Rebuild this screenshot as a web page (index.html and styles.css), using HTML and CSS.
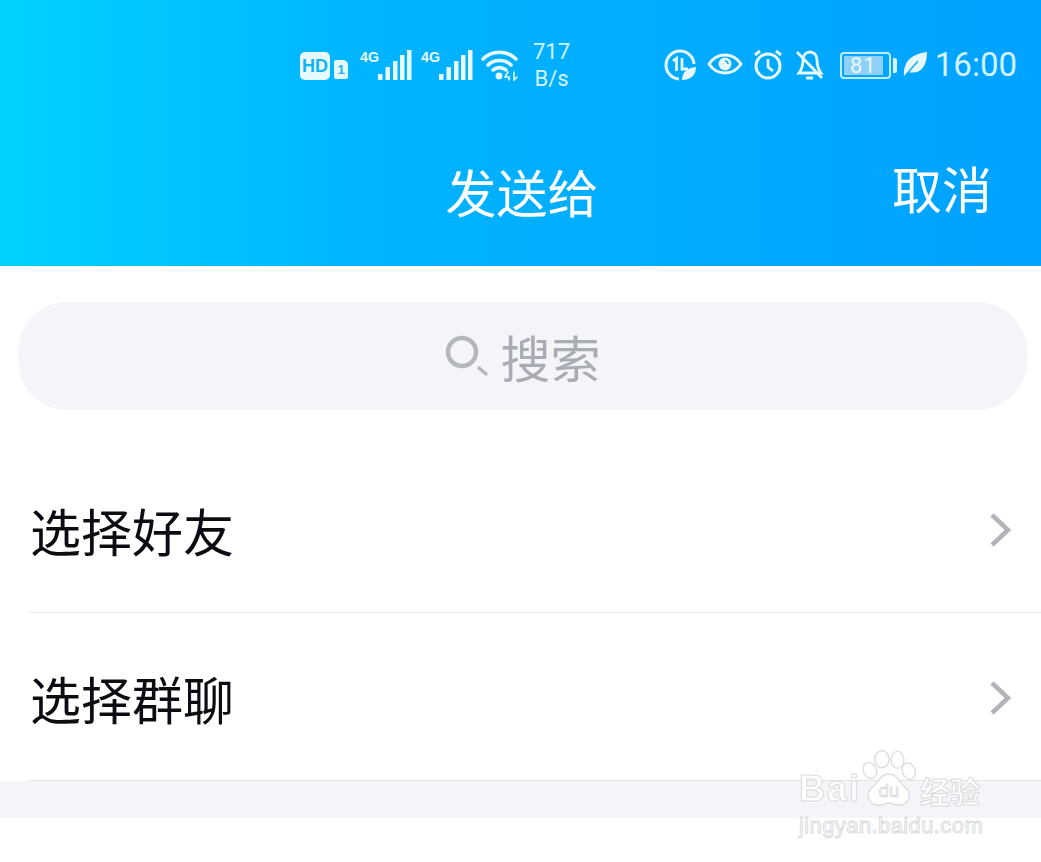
FILE: index.html
```html
<!DOCTYPE html>
<html lang="zh-CN">
<head>
    <meta charset="UTF-8">
    <title>发送给</title>
    <link rel="stylesheet" href="styles.css">
</head>
<body>

<div class="page">
    <header class="header">
        <div class="status">
            <div class="status-left">
                <span class="hd">HD</span>
                <span class="sim">1</span>
                <svg class="signal" width="52" height="34" viewBox="0 0 52 34">
                    <text x="0" y="15" class="net" textLength="19" lengthAdjust="spacingAndGlyphs">4G</text>
                    <rect x="18" y="27" width="4.5" height="6"/><rect x="25.5" y="20" width="4.5" height="13"/><rect x="33" y="14" width="4.5" height="19"/><rect x="40" y="8" width="4.5" height="25"/><rect x="47" y="3" width="4.5" height="30"/>
                </svg>
                <svg class="signal" width="52" height="34" viewBox="0 0 52 34">
                    <text x="0" y="15" class="net" textLength="19" lengthAdjust="spacingAndGlyphs">4G</text>
                    <rect x="18" y="27" width="4.5" height="6"/><rect x="25.5" y="20" width="4.5" height="13"/><rect x="33" y="14" width="4.5" height="19"/><rect x="40" y="8" width="4.5" height="25"/><rect x="47" y="3" width="4.5" height="30"/>
                </svg>
                <svg class="wifi" width="38" height="32" viewBox="0 0 38 32" fill="none" stroke="#e6f9ff" stroke-width="3.6" stroke-linecap="round">
                    <path d="M2 10C11 1 26 1 35 10"/>
                    <path d="M7 16C13 10 24 10 30 16"/>
                    <path d="M12 21C16 18 21 18 25 21"/>
                    <circle cx="18" cy="27" r="3.4" fill="#e6f9ff" stroke="none"/>
                    <path d="M27 23l-3 5h4v3M33 23v8l3-3" stroke-width="1.6"/>
                </svg>
                <span class="speed">717<br>B/s</span>
            </div>
            <div class="status-right">
                <svg class="ic-usage" width="32" height="32" viewBox="0 0 32 32" fill="none" stroke="#e6f9ff" stroke-width="3">
                    <path d="M30 15A14 14 0 1 0 15 30"/>
                    <path d="M9 12l3.5-2.5V22M18 9v11h6" stroke-width="2.8"/>
                    <path d="M18 31c0-8 5-12 14-13 0 8-5 13-14 13z" fill="#e6f9ff" stroke="none"/>
                </svg>
                <svg class="ic-eye" width="36" height="24" viewBox="0 0 36 24" fill="none" stroke="#e6f9ff" stroke-width="3">
                    <path d="M2 12C10 0 26 0 34 12C26 24 10 24 2 12z"/>
                    <circle cx="18" cy="12" r="6.5" fill="#e6f9ff" stroke="none"/>
                    <path d="M18 9a3 3 0 0 1 3 3" stroke="#19aaff" stroke-width="1.6"/>
                </svg>
                <svg class="ic-alarm" width="32" height="32" viewBox="0 0 32 32" fill="none" stroke="#e6f9ff" stroke-width="3">
                    <circle cx="16" cy="18" r="12"/>
                    <path d="M16 11v8l5 4" stroke-width="2.8"/>
                    <path d="M3 7l5-4M29 7l-5-4"/>
                </svg>
                <svg class="ic-bell" width="29" height="31" viewBox="0 0 29 31" fill="none" stroke="#e6f9ff" stroke-width="2.8">
                    <path d="M8 11c0-5 3-8 7-8s7 3 7 8c0 6 1 9 4 13H4c3-4 4-7 4-13z"/>
                    <path d="M11 29h7M2 3l25 26"/>
                </svg>
                <div class="battery">
                    <div class="battery-body"><span class="battery-fill">81</span></div>
                    <span class="battery-tip"></span>
                </div>
                <svg class="ic-leaf" width="24" height="25" viewBox="0 0 24 25">
                    <path d="M1 24C0 10 8 2 24 0c0 15-7 23-19 20z" fill="#e6f9ff"/>
                    <path d="M2 24L15 9" stroke="#19aaff" stroke-width="1.4"/>
                </svg>
                <span class="time">16:00</span>
            </div>
        </div>
        <div class="nav">
            <h1 class="nav-title">发送给</h1>
            <span class="nav-cancel">取消</span>
        </div>
    </header>

    <div class="search-wrap">
        <div class="search">
            <svg width="44" height="44" viewBox="0 0 44 44" fill="none" stroke="#b4b7bd" stroke-width="4.5">
                <circle cx="17" cy="18" r="14"/>
                <path d="M34 34l7 6" stroke-width="3.4" stroke-linecap="round"/>
            </svg>
            <span>搜索</span>
        </div>
    </div>

    <ul class="list">
        <li class="row">
            <span>选择好友</span>
            <svg class="chevron" width="24" height="36" viewBox="0 0 24 36" fill="none" stroke="#b2b4ba" stroke-width="4.5">
                <path d="M3 3l16 15L3 33"/>
            </svg>
        </li>
        <li class="row">
            <span>选择群聊</span>
            <svg class="chevron" width="24" height="36" viewBox="0 0 24 36" fill="none" stroke="#b2b4ba" stroke-width="4.5">
                <path d="M3 3l16 15L3 33"/>
            </svg>
        </li>
    </ul>
    <div class="band"></div>

    <div class="watermark">
        <div class="wm-top">
            <span class="wm-bai">Bai</span>
            <svg class="wm-paw" width="54" height="58" viewBox="0 0 76 82" fill="#fff" stroke="#dcdee1" stroke-width="2">
                <ellipse cx="11" cy="29" rx="9" ry="12" transform="rotate(-25 11 29)"/>
                <ellipse cx="28" cy="13" rx="10" ry="12"/>
                <ellipse cx="50" cy="14" rx="9" ry="12"/>
                <ellipse cx="66" cy="30" rx="9" ry="12" transform="rotate(-20 66 30)"/>
                <path d="M38 34C50 34 52 46 62 54c9 8 4 24-10 24-6 0-9-3-14-3s-9 4-16 3C9 77 4 62 14 53c9-6 11-19 24-19z"/>
                <text x="38" y="66" class="wm-du">du</text>
            </svg>
            <span class="wm-cn">经验</span>
        </div>
        <div class="wm-url">jingyan.baidu.com</div>
    </div>
</div>

</body>
</html>
```

FILE: styles.css
```css
* { box-sizing: border-box; }
html, body { margin: 0; padding: 0; }
body {
    background: #fff;
    font-family: "Noto Sans CJK SC", "Noto Sans", sans-serif;
    color: #0c0c12;
}
.page {
    position: relative;
    width: 1041px;
    height: 862px;
    overflow: hidden;
}

/* header */
.header {
    height: 266px;
    background: linear-gradient(90deg, #00d2ff 0%, #00b4ff 35%, #00a2ff 100%);
    color: #fff;
}
.status {
    height: 132px;
    padding: 39px 24px 0 300px;
    display: flex;
    justify-content: space-between;
    align-items: flex-start;
}
.status-left, .status-right {
    display: flex;
    align-items: center;
    height: 52px;
}
.status-right { gap: 11px; }
.hd {
    width: 30px;
    height: 28px;
    background: #e6f9ff;
    color: #12b4f5;
    border-radius: 5px;
    font: bold 18px/28px "Liberation Sans", sans-serif;
    text-align: center;
    margin-top: 2px;
}
.sim {
    width: 14px;
    height: 19px;
    margin: 9px 12px 0 4px;
    background: #e6f9ff;
    color: #12b4f5;
    border-radius: 2px 5px 2px 2px;
    font: bold 13px/19px "Liberation Sans", sans-serif;
    text-align: center;
}
.signal { fill: #e6f9ff; margin-right: 9px; margin-top: -2px; }
.net { font: bold 15px "Liberation Sans", sans-serif; }
.wifi { margin: 0 13px 0 -1px; }
.speed {
    font: 22px/27px Roboto, sans-serif;
    color: #d4f3ff;
    text-align: center;
    width: 39px;
}
.ic-eye { margin-top: -2px; }
.ic-alarm { margin-left: -2px; margin-top: -2px; }
.ic-bell { margin-top: -2px; }
.ic-leaf { margin-top: -2px; }
.battery { display: flex; align-items: center; margin-left: 5px; margin-right: -5px; margin-top: 1px; }
.battery-body {
    width: 51px;
    height: 27px;
    border: 2px solid #bfeaff;
    border-radius: 4px;
    padding: 2px;
}
.battery-fill {
    display: block;
    width: 39px;
    height: 19px;
    background: #8ed0f8;
    color: #e6f9ff;
    font: 22px/19px Roboto, sans-serif;
    text-align: center;
    letter-spacing: 1px;
}
.battery-tip {
    width: 4px;
    height: 15px;
    margin-left: 2px;
    background: #d4f3ff;
    border-radius: 0 2px 2px 0;
}
.time {
    font: 33px/52px Roboto, sans-serif;
    color: #d4f3ff;
    margin-left: -3px;
}
.nav {
    position: relative;
    height: 120px;
    display: flex;
    align-items: center;
    justify-content: center;
    padding: 0 0 3px 3px;
}
.nav-title {
    margin: 0;
    font-size: 51px;
    font-weight: 400;
    line-height: 60px;
}
.nav-cancel {
    position: absolute;
    right: 49px;
    top: 25px;
    font-size: 50px;
    line-height: 60px;
}

/* search */
.search-wrap { padding: 36px 14px 35px 18px; }
.search {
    height: 108px;
    background: #f3f5f8;
    border-radius: 50px;
    display: flex;
    align-items: center;
    justify-content: center;
    gap: 12px;
    color: #a9acb4;
    font-size: 50px;
}

/* rows */
.list {
    list-style: none;
    margin: 0;
    padding: 0 0 0 30px;
}
.row {
    height: 168px;
    border-bottom: 1px solid #e3e4e6;
    display: flex;
    align-items: center;
    justify-content: space-between;
    padding: 2px 28px 0 0;
    font-size: 51px;
    line-height: 60px;
}
.band {
    height: 37px;
    background: #f3f5f8;
}

/* watermark */
.watermark {
    position: absolute;
    left: 799px;
    top: 750px;
    width: 200px;
}
.wm-top { display: flex; align-items: flex-end; height: 58px; }
.wm-bai, .wm-cn, .wm-url {
    color: #fff;
    -webkit-text-stroke: 1px #dadcdf;
    white-space: nowrap;
}
.wm-bai {
    font: bold 36px/36px "Liberation Sans", sans-serif;
    letter-spacing: 2px;
    margin-right: 1px;
    padding-bottom: 1px;
}
.wm-paw { flex: none; margin-right: 4px; }
.wm-du {
    font: 26px "Liberation Sans", sans-serif;
    fill: #fff;
    stroke: #cfd1d4;
    stroke-width: 1;
    text-anchor: middle;
}
.wm-cn { font-size: 30px; line-height: 36px; font-weight: 700; }
.wm-url {
    font: 22px/24px "Liberation Sans", sans-serif;
    letter-spacing: .4px;
    margin-top: 6px;
}
```
